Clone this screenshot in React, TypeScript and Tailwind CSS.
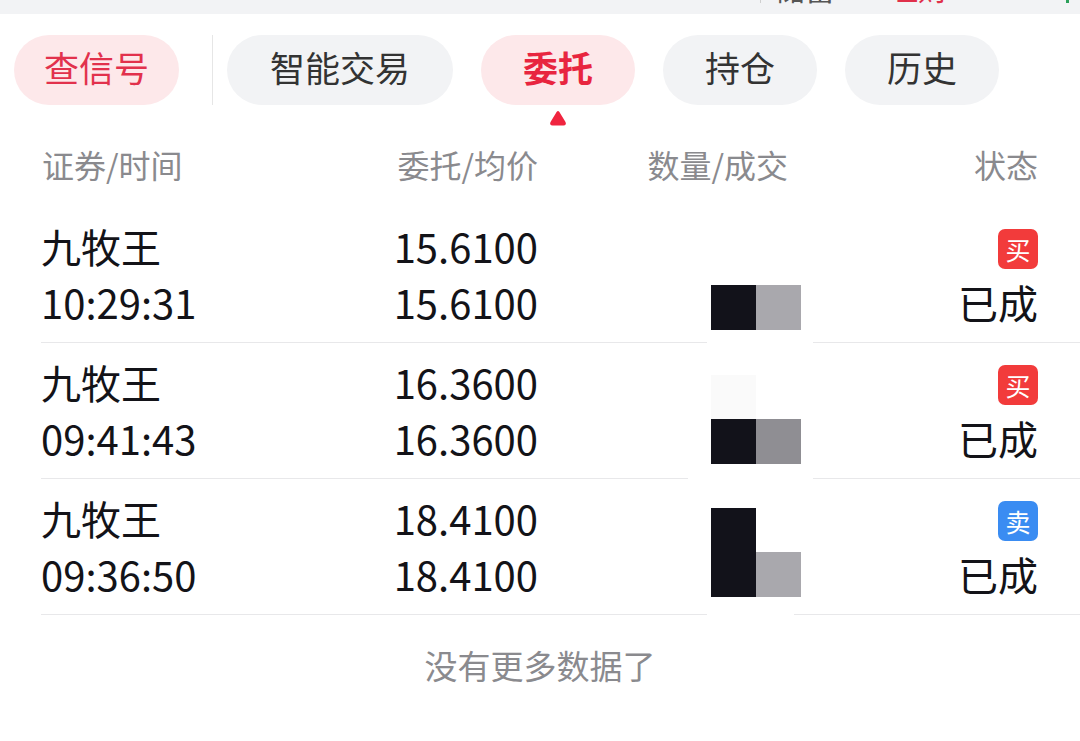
import React from "react";

const font = { fontFamily: '"Noto Sans CJK SC", "Noto Sans", sans-serif' };

type Row = { name: string; time: string; p1: string; p2: string; side: "买" | "卖"; blocks: number };

const rows: Row[] = [
  { name: "九牧王", time: "10:29:31", p1: "15.6100", p2: "15.6100", side: "买", blocks: 0 },
  { name: "九牧王", time: "09:41:43", p1: "16.3600", p2: "16.3600", side: "买", blocks: 1 },
  { name: "九牧王", time: "09:36:50", p1: "18.4100", p2: "18.4100", side: "卖", blocks: 2 },
];

function Blocks({ kind }: { kind: number }) {
  if (kind === 0)
    return (
      <div className="absolute left-[707px] top-[0px] w-[106px] h-[137px] bg-white">
        <div className="absolute left-[4px] top-[78px] w-[45px] h-[45px] bg-[#12121a]" />
        <div className="absolute left-[49px] top-[78px] w-[45px] h-[45px] bg-[#a9a8ad]" />
      </div>
    );
  if (kind === 1)
    return (
      <div className="absolute left-[688px] top-[0px] w-[125px] h-[137px] bg-white">
        <div className="absolute left-[23px] top-[32px] w-[45px] h-[44px] bg-[#fafafa]" />
        <div className="absolute left-[23px] top-[76px] w-[45px] h-[45px] bg-[#12121a]" />
        <div className="absolute left-[68px] top-[76px] w-[45px] h-[45px] bg-[#8f8e93]" />
      </div>
    );
  return (
    <div className="absolute left-[707px] top-[0px] w-[87px] h-[137px] bg-white">
      <div className="absolute left-[4px] top-[29px] w-[45px] h-[89px] bg-[#12121a]" />
      <div className="absolute left-[49px] top-[73px] w-[45px] h-[45px] bg-[#a9a8ad]" />
    </div>
  );
}

export default function App() {
  return (
    <div style={font} className="w-[1080px] h-[741px] bg-white overflow-hidden">
      {/* top strip */}
      <div className="relative h-[14px] bg-[#f2f3f5] overflow-hidden">
        <div className="absolute left-[760px] top-0 w-[1px] h-[3px] bg-[#cfcfcf]" />
        <div className="absolute left-[775px] -top-[29px] text-[30px] leading-[32px] text-[#555]">储蓄</div>
        <div className="absolute left-[888px] -top-[29px] text-[30px] leading-[32px] text-[#e0304a]">理财</div>
        <div className="absolute left-[1066px] top-0 w-[3px] h-[3px] bg-[#2ca05a]" />
      </div>

      {/* tabs */}
      <div className="flex items-start pl-[14px] pt-[21px] h-[91px]">
        <div className="h-[70px] w-[165px] pb-[5px] rounded-full bg-[#fde8ea] flex items-center justify-center text-[35px] text-[#e2314c]">
          查信号
        </div>
        <div className="ml-[33px] mr-[14px] w-[1px] h-[70px] bg-[#e6e6e6]" />
        <div className="flex gap-[28px]">
          <div className="h-[70px] w-[226px] pb-[5px] rounded-full bg-[#f2f3f5] flex items-center justify-center text-[35px] text-[#333]">
            智能交易
          </div>
          <div className="h-[70px] w-[154px] pb-[5px] rounded-full bg-[#fde8ea] flex items-center justify-center text-[35px] font-bold text-[#e8253f]">
            委托
          </div>
          <div className="h-[70px] w-[154px] pb-[5px] rounded-full bg-[#f2f3f5] flex items-center justify-center text-[35px] text-[#333]">
            持仓
          </div>
          <div className="h-[70px] w-[154px] pb-[5px] rounded-full bg-[#f2f3f5] flex items-center justify-center text-[35px] text-[#333]">
            历史
          </div>
        </div>
      </div>
      <div className="h-[22px] pl-[549px] pt-[5px]">
        <svg width="18" height="16" viewBox="0 0 18 16" className="block">
          <path d="M9 1 C10 1 10.5 2 11 3 L16.5 12 C17.5 14 16.5 15.5 14.5 15.5 L3.5 15.5 C1.5 15.5 0.5 14 1.5 12 L7 3 C7.5 2 8 1 9 1 Z" fill="#f0243f" />
        </svg>
      </div>

      {/* header */}
      <div className="flex items-center h-[80px] pb-[6px] px-[42px] text-[32px] text-[#8a8a8e]">
        <div className="w-[300px]">证券/时间</div>
        <div className="w-[196px] text-right">委托/均价</div>
        <div className="w-[250px] text-right">数量/成交</div>
        <div className="flex-1 text-right">状态</div>
      </div>

      {/* rows */}
      {rows.map((r, i) => (
        <div key={i} className="relative ml-[41px]">
          <div className="flex pt-[11px] pb-[12px] pr-[42px] border-b border-[#e8e8ea] text-[40px] leading-[56px] text-[#131318]">
            <div className="w-[301px] flex flex-col">
              <span>{r.name}</span>
              <span>{r.time}</span>
            </div>
            <div className="w-[196px] flex flex-col items-end">
              <span>{r.p1}</span>
              <span>{r.p2}</span>
            </div>
            <div className="w-[250px]" />
            <div className="flex-1 flex flex-col items-end">
              <span className="h-[56px] pt-[6px] flex items-center">
                <span
                  className={`w-[40px] h-[40px] rounded-[7px] flex items-center justify-center text-[25px] leading-none text-white ${
                    r.side === "买" ? "bg-[#f23b3b]" : "bg-[#3a8cf2]"
                  }`}
                >
                  {r.side}
                </span>
              </span>
              <span>已成</span>
            </div>
          </div>
          <div className="absolute -left-[41px] top-0">
            <Blocks kind={r.blocks} />
          </div>
        </div>
      ))}

      <div className="pt-[30px] text-center text-[33px] leading-[40px] text-[#8a8a8e]">没有更多数据了</div>
    </div>
  );
}
